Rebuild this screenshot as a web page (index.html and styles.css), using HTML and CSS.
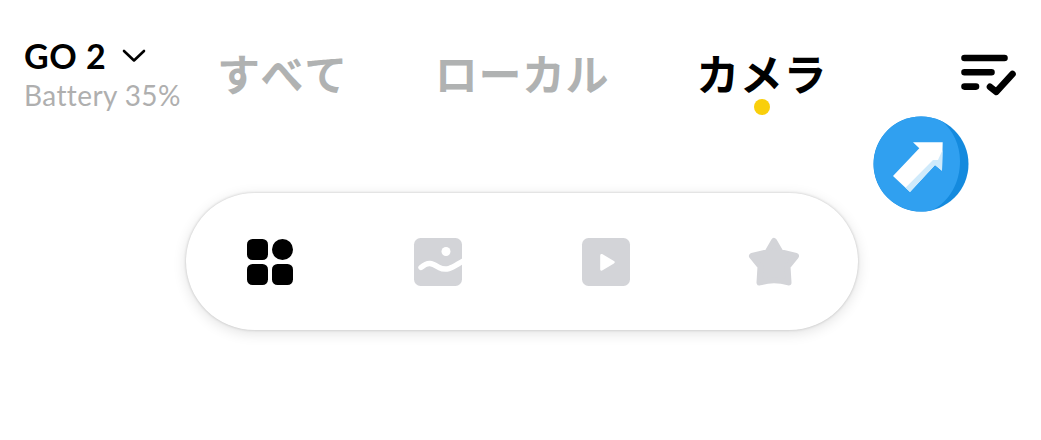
FILE: index.html
```html
<!DOCTYPE html>
<html lang="ja">
<head>
  <meta charset="utf-8">
  <title>GO 2</title>
  <link rel="stylesheet" href="styles.css">
</head>
<body>
  <header class="topbar">
    <div class="device">
      <div class="device-name">
        <span class="name">GO 2</span>
        <svg class="chevron" viewBox="0 0 24 14" fill="none" stroke="currentColor" stroke-width="2.6" stroke-linecap="round" stroke-linejoin="round">
          <path d="M2 2l10 9.5L22 2"></path>
        </svg>
      </div>
      <div class="battery">Battery 35%</div>
    </div>

    <nav class="tabs">
      <a class="tab">すべて</a>
      <a class="tab">ローカル</a>
      <a class="tab active">カメラ</a>
    </nav>

    <svg class="select-icon" viewBox="0 0 56 42" fill="none" stroke="currentColor" stroke-width="6.6" stroke-linecap="round" stroke-linejoin="round">
      <path d="M4.5 4h40M4.5 18.3h27M4.5 32.6h11.5"></path>
      <path d="M30 32.8l6.3 5L52.5 20"></path>
    </svg>
  </header>

  <nav class="filters">
    <svg class="icon active" viewBox="0 0 48 48" fill="currentColor">
      <rect x="1" y="1" width="21" height="21" rx="5.5"></rect>
      <circle cx="36.5" cy="11.5" r="10.5"></circle>
      <rect x="1" y="26" width="21" height="21" rx="5.5"></rect>
      <rect x="26" y="26" width="21" height="21" rx="5.5"></rect>
    </svg>
    <svg class="icon" viewBox="0 0 48 48" fill="currentColor">
      <rect width="48" height="48" rx="6.5"></rect>
      <circle class="cut" cx="32" cy="13.5" r="4.5"></circle>
      <path class="cut-line" d="M7 29.5C15 22.5 19 26 25 29.5C34 34 40 28 49 23"></path>
    </svg>
    <svg class="icon" viewBox="0 0 48 48" fill="currentColor">
      <rect width="48" height="48" rx="6.5"></rect>
      <path class="cut" d="M18.2 17.5c0-1.6 1.2-2 2.4-1.2l11.3 6.7c1.2.8 1.2 1.7 0 2.4l-11.3 6.9c-1.2.8-2.4.3-2.4-1.1z"></path>
    </svg>
    <svg class="icon" viewBox="0 0 48 48" fill="currentColor" stroke="currentColor" stroke-width="6" stroke-linejoin="round">
      <path d="M24 3L30.5 14.2L46 18L37.5 28.5L38.5 44.5Q24 40 9.5 44.5L10.5 28.5L2 18L17.5 14.2z"></path>
    </svg>
  </nav>

  <svg class="pointer" viewBox="0 0 96 96">
    <circle cx="48" cy="48" r="47.5" fill="#148ade"></circle>
    <path d="M48 .5A47.5 47.5 0 1 0 60 94C77 84 87 67 87 45C87 29 80 14 69 5.2A47.5 47.5 0 0 0 48 .5z" fill="#30a0f0"></path>
    <path d="M40 26.3H69.7L69 54.7L62 49L37 76L20 60L46.3 32.3z" fill="#fff"></path>
    <path d="M69.5 34L69 54.7L62 49L37 76L32.5 71.7L60 44L65 44z" fill="#cfeafb"></path>
  </svg>
</body>
</html>
```

FILE: styles.css
```css
body {
  margin: 0;
  height: 440px;
  position: relative;
  overflow: hidden;
  background: #fff;
  color: #000;
  font-family: Lato, "Noto Sans CJK JP", sans-serif;
}

.topbar {
  display: flex;
  height: 193px;
  box-sizing: border-box;
  padding: 35px 25px 0 24px;
}

.device {
  width: 193px;
  flex: none;
}

.device-name {
  display: flex;
  align-items: center;
  height: 41px;
}

.name {
  width: 98px;
  font-size: 34px;
  font-weight: 700;
  letter-spacing: 0.5px;
  white-space: nowrap;
}

.chevron {
  width: 24px;
  height: 14px;
}

.battery {
  color: #afafaf;
  font-size: 28px;
  line-height: 38px;
  letter-spacing: 0.4px;
  font-variant-ligatures: none;
  white-space: nowrap;
}

.tabs {
  display: flex;
  gap: 87px;
  flex: 1;
}

.tab {
  position: relative;
  height: 80px;
  font-family: "Noto Sans CJK JP", sans-serif;
  font-size: 43px;
  font-weight: 700;
  font-kerning: none;
  letter-spacing: 0.6px;
  line-height: 75px;
  white-space: nowrap;
  color: #b0b2b2;
}

.tab.active {
  color: #000;
}

.tab.active::after {
  content: "";
  position: absolute;
  left: 50%;
  top: 64px;
  width: 16px;
  height: 16px;
  margin-left: -8px;
  border-radius: 50%;
  background: #f9cf0b;
}

.select-icon {
  width: 56px;
  height: 42px;
  margin-top: 19px;
  flex: none;
}

.filters {
  display: flex;
  align-items: center;
  justify-content: space-between;
  box-sizing: border-box;
  width: 672px;
  height: 137px;
  margin-left: 186px;
  padding: 0 60.5px 0 59.5px;
  border-radius: 69px;
  background: #fff;
  box-shadow: 0 0 3px rgba(0, 0, 0, 0.2), 0 3px 14px rgba(0, 0, 0, 0.12);
}

.icon {
  width: 48px;
  height: 48px;
  color: #d3d4d8;
  overflow: visible;
}

.icon.active {
  color: #000;
}

.cut {
  fill: #fff;
}

.cut-line {
  fill: none;
  stroke: #fff;
  stroke-width: 5.4;
  stroke-linecap: round;
}

.pointer {
  position: absolute;
  left: 873px;
  top: 116px;
  width: 96px;
  height: 96px;
}
```
